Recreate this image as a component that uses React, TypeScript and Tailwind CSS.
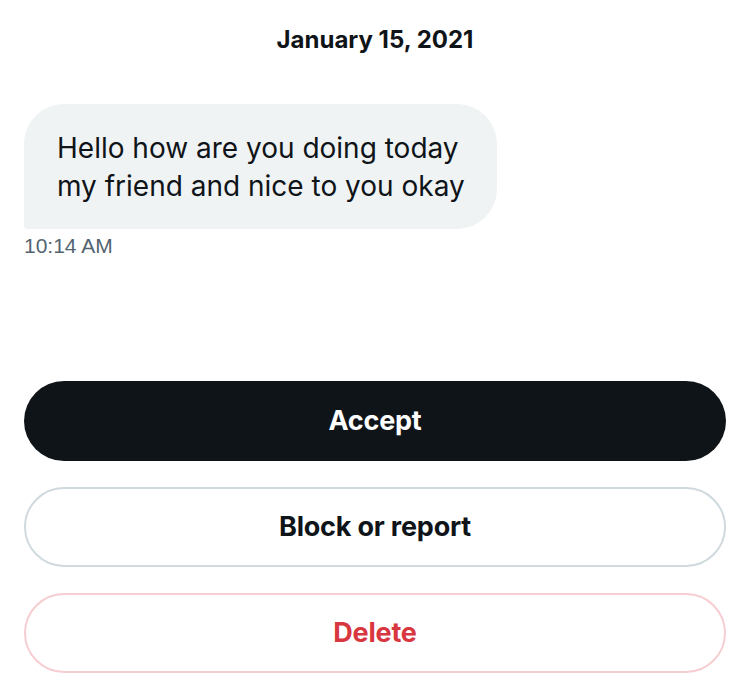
import React from 'react';

const font = { fontFamily: 'Inter, "Noto Sans", sans-serif' };

const Button: React.FC<{ label: string; className: string }> = ({ label, className }) => (
  <button
    className={`w-full h-[80px] rounded-full flex items-center justify-center text-[27px] font-bold tracking-[-0.2px] ${className}`}
  >
    {label}
  </button>
);

export default function App() {
  return (
    <div className="w-[750px] h-[698px] bg-white px-6 text-[#0f1419]" style={font}>
      <div className="h-[80px] flex items-center justify-center text-[24px] font-bold">
        January 15, 2021
      </div>

      <div className="mt-[24px] w-[473px] bg-[#eff3f4] rounded-[40px] rounded-bl-[4px] pl-[33px] pr-[30px] pt-[25px] pb-[24px] text-[28px] leading-[38px] whitespace-nowrap">
        Hello how are you doing today
        <br />
        my friend and nice to you okay
      </div>
      <div
        className="mt-[5px] text-[21px] leading-[24px] text-[#536471]"
        style={{ fontFamily: '"Liberation Sans", Arial, sans-serif' }}
      >
        10:14 AM
      </div>

      <div className="mt-[123px] flex flex-col gap-[26px]">
        <Button label="Accept" className="bg-[#0f1419] text-white" />
        <Button label="Block or report" className="bg-white border-2 border-[#cfd9de] text-[#0f1419]" />
        <Button label="Delete" className="bg-white border-2 border-[#f6cdd1] text-[#d9373f]" />
      </div>
    </div>
  );
}
